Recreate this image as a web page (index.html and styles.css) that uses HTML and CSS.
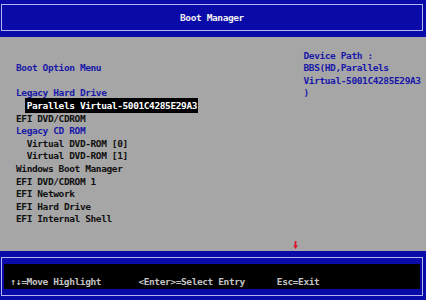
FILE: index.html
```html
<!DOCTYPE html>
<html lang="en">
<head>
    <meta charset="UTF-8">
    <meta name="viewport" content="width=device-width, initial-scale=1.0">
    <title>Boot Manager</title>
    <link rel="stylesheet" href="styles.css">
</head>
<body>
    <div class="screen">
        <header class="top-bar">
            <div class="frame">
                <h1 class="title">Boot Manager</h1>
            </div>
        </header>

        <main class="content">
            <div class="columns">
                <ul class="menu">
                    <li class="heading">Boot Option Menu</li>
                    <li class="blank"></li>
                    <li class="heading">Legacy Hard Drive</li>
                    <li class="sub"><span class="selected">Parallels Virtual-5001C4285E29A3</span></li>
                    <li>EFI DVD/CDROM</li>
                    <li class="heading">Legacy CD ROM</li>
                    <li class="sub">Virtual DVD-ROM [0]</li>
                    <li class="sub">Virtual DVD-ROM [1]</li>
                    <li>Windows Boot Manager</li>
                    <li>EFI DVD/CDROM 1</li>
                    <li>EFI Network</li>
                    <li>EFI Hard Drive</li>
                    <li>EFI Internal Shell</li>
                </ul>

                <!-- Help text for the highlighted entry -->
                <div class="help">
                    <p>Device Path :</p>
                    <p>BBS(HD,Parallels</p>
                    <p>Virtual-5001C4285E29A3</p>
                    <p>)</p>
                </div>
            </div>
            <div class="more">
                <svg width="5" height="8" viewBox="0 0 5 8"><path d="M1.6 0h1.8v4.5h1.4L2.5 8 0.2 4.5h1.4z" fill="#e0102a"/></svg>
            </div>
        </main>

        <footer class="bottom-bar">
            <div class="frame">
                <div class="keys">↑↓=Move Highlight       &lt;Enter&gt;=Select Entry      Esc=Exit</div>
            </div>
        </footer>
    </div>
</body>
</html>
```

FILE: styles.css
```css
body {
    margin: 0;
    padding: 0;
    background-color: #a6a6a6;
    font-family: "DejaVu Sans Mono", monospace;
    font-size: 9.5px;
    font-weight: bold;
    letter-spacing: -0.395px;
    line-height: 12.6px;
}

.screen {
    width: 426px;
    height: 300px;
    overflow: hidden;
    display: flex;
    flex-direction: column;
}

/* Title bar */
.top-bar {
    height: 37px;
    padding: 4px 3px 0 1px;
    box-sizing: border-box;
    background-color: #0a0aa8;
}

.frame {
    border: 1px solid #b4b4f0;
    box-sizing: border-box;
}

.top-bar .frame {
    height: 27px;
}

.title {
    margin: 0;
    font-size: inherit;
    font-weight: bold;
    line-height: 25px;
    text-align: center;
    color: #f0f0f0;
}

/* Main area */
.content {
    height: 214.3px;
    padding-top: 12.6px;
    box-sizing: border-box;
}

.columns {
    display: flex;
}

.menu {
    list-style: none;
    margin: 12.6px 0 0 0;
    padding: 0 0 0 16px;
    width: 287.5px;
    flex: 0 0 auto;
    color: #101010;
}

.menu li {
    height: 12.6px;
    white-space: pre;
}

.menu .heading {
    color: #1818a8;
}

.menu .sub {
    padding-left: 10.65px;
}

.selected {
    background-color: #000;
    color: #fff;
    padding: 2px 1px 2px 2px;
    margin-left: -2px;
}

.help {
    color: #1818a8;
}

.help p {
    margin: 0;
    white-space: pre;
}

.more {
    margin-top: 12.6px;
    height: 12.6px;
    padding-left: 293px;
    display: flex;
    align-items: center;
}

.more svg {
    display: block;
}

/* Key help bar */
.bottom-bar {
    height: 48.7px;
    padding: 5.7px 3px 0 1px;
    box-sizing: border-box;
    background-color: #0a0aa8;
}

.bottom-bar .frame {
    height: 39px;
    padding: 5.9px 2px 0 2px;
}

.keys {
    background-color: #000;
    color: #c4c4c4;
    height: 25.2px;
    padding: 12.6px 0 0 6.6px;
    box-sizing: border-box;
    white-space: pre;
}
```
